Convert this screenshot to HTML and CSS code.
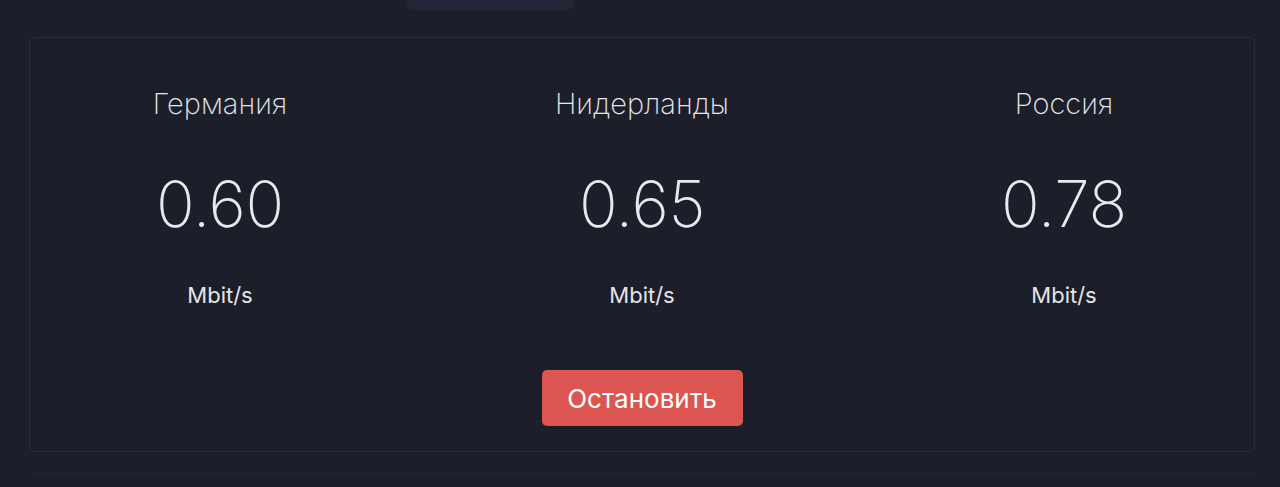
FILE: index.html
```html
<!DOCTYPE html>
<html lang="ru">
  <head>
    <meta charset="UTF-8" />
    <meta name="viewport" content="width=device-width, initial-scale=1.0" />
    <title>Тест скорости</title>
    <link rel="stylesheet" href="styles.css">
  </head>
  <body>
    <div class="tab-stub"></div>

    <div class="speed-card">
      <div class="speed-grid">
        <div class="speed-col">
          <h3 class="country">Германия</h3>
          <div class="speed-value">0.60</div>
          <div class="speed-unit">Mbit/s</div>
        </div>
        <div class="speed-col">
          <h3 class="country">Нидерланды</h3>
          <div class="speed-value">0.65</div>
          <div class="speed-unit">Mbit/s</div>
        </div>
        <div class="speed-col">
          <h3 class="country">Россия</h3>
          <div class="speed-value">0.78</div>
          <div class="speed-unit">Mbit/s</div>
        </div>
      </div>

      <div class="btn-group">
        <button class="btn stop">Остановить</button>
      </div>
    </div>

    <div class="divider"></div>
  </body>
</html>
```

FILE: styles.css
```css
body {
  margin: 0;
  padding: 0 25px 0 29px;
  background: #1c1f29;
  font-family: Inter, "Noto Sans", sans-serif;
  color: #e8e9ee;
  overflow: hidden;
}

.tab-stub {
  width: 166px;
  height: 10px;
  margin-left: 378px;
  background: #222636;
  border-radius: 0 0 6px 6px;
}

.speed-card {
  margin-top: 27px;
  height: 415px;
  box-sizing: border-box;
  border: 1px solid #2a2e39;
  border-radius: 6px;
  padding-top: 46px;
}

.speed-grid {
  display: grid;
  grid-template-columns: repeat(3, 1fr);
  margin: 0 -21px;
}

.speed-col {
  text-align: center;
}

.country {
  margin: 0;
  font-size: 29px;
  font-weight: 200;
  line-height: 40px;
  color: #e6e7ec;
}

.speed-value {
  margin-top: 45px;
  font-size: 64px;
  font-weight: 200;
  line-height: 70px;
  letter-spacing: -0.3px;
}

.speed-unit {
  margin-top: 42px;
  font-size: 22px;
  font-weight: 400;
  line-height: 28px;
  color: #e3e4ea;
}

.btn-group {
  display: flex;
  justify-content: center;
  margin-top: 61px;
}

.btn {
  width: 201px;
  height: 56px;
  border: none;
  border-radius: 5px;
  font-family: inherit;
  font-size: 26px;
  font-weight: 400;
  color: #fff;
  cursor: pointer;
}

.btn.stop {
  background: #dc5550;
}

.btn.stop:hover {
  background: #c94641;
}

.divider {
  margin-top: 21px;
  height: 1px;
  background: #23262f;
}
```
